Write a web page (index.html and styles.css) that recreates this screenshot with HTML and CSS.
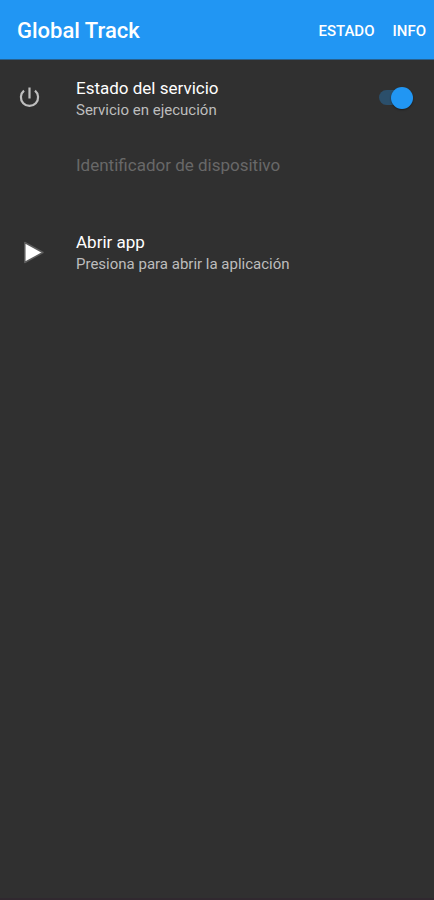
FILE: index.html
```html
<!DOCTYPE html>
<html lang="es">
<head>
<meta charset="utf-8">
<meta name="viewport" content="width=device-width, initial-scale=1">
<title>Global Track</title>
<link rel="stylesheet" href="styles.css">
</head>
<body>
<header class="app-bar">
  <h1 class="app-title">Global Track</h1>
  <nav class="actions">
    <a class="action" href="#estado">ESTADO</a>
    <a class="action" href="#info">INFO</a>
  </nav>
</header>
<main class="settings">
  <label class="row" for="service">
    <svg class="icon" viewBox="0 0 28 28" aria-hidden="true">
      <path d="M13.500 3.500v11M8 6.700a8.600 8.600 0 1 0 11 0" fill="none" stroke="#bebebe" stroke-width="2.200"/>
    </svg>
    <span class="text">
      <span class="name">Estado del servicio</span>
      <span class="summary">Servicio en ejecución</span>
    </span>
    <input class="switch" type="checkbox" role="switch" id="service" checked>
  </label>
  <div class="row disabled">
    <span class="icon"></span>
    <span class="text">
      <span class="name">Identificador de dispositivo</span>
      <span class="summary"></span>
    </span>
  </div>
  <button class="row" type="button">
    <svg class="icon" viewBox="0 0 28 28" aria-hidden="true">
      <path d="M8.800 4.500v20L27 14.500z" fill="#fff" stroke="#5c5c5c" stroke-width="1.500" stroke-linejoin="round"/>
    </svg>
    <span class="text">
      <span class="name">Abrir app</span>
      <span class="summary">Presiona para abrir la aplicación</span>
    </span>
  </button>
</main>
<footer class="system-edge"></footer>
</body>
</html>
```
FILE: styles.css
```css
* { box-sizing: border-box; }

body {
  margin: 0;
  min-height: 100vh;
  display: flex;
  flex-direction: column;
  background: #303030;
  color: #fff;
  font-family: Roboto, "Liberation Sans", sans-serif;
}

.app-bar {
  height: 60px;
  padding: 2px 8px 0 17px;
  display: flex;
  align-items: center;
  justify-content: space-between;
  background: #2196f3;
  border-bottom: 1px solid #27618f;
}

.app-title {
  margin: 0;
  font-size: 22px;
  font-weight: 500;
}

.actions { display: flex; gap: 18px; }

.action {
  color: inherit;
  font-size: 15px;
  font-weight: 500;
  text-decoration: none;
}

.settings { flex: 1; }

.row {
  width: 100%;
  height: 77px;
  padding: 0 21px 2px 16px;
  display: flex;
  align-items: center;
  border: 0;
  background: none;
  color: inherit;
  font: inherit;
  text-align: left;
}

.icon {
  width: 28px;
  height: 28px;
  margin-right: 32px;
  flex: none;
}

.text {
  flex: 1;
  padding-top: 2px;
  display: flex;
  flex-direction: column;
}

.name {
  font-size: 17px;
  line-height: 22px;
}

.summary {
  min-height: 22px;
  color: #bdbdbd;
  font-size: 15px;
  line-height: 22px;
}

.disabled .name { color: #686868; }

.switch {
  appearance: none;
  width: 34px;
  height: 22px;
  margin: 0;
  display: flex;
  align-items: center;
  position: relative;
}

.switch::before {
  content: "";
  width: 30px;
  height: 15px;
  border-radius: 8px;
  background: #444;
}

.switch::after {
  content: "";
  position: absolute;
  left: 0;
  width: 22px;
  height: 22px;
  border-radius: 50%;
  background: #bdbdbd;
  box-shadow: 0 1px 2px #0006;
}

.switch:checked::before { background: #2b4f6b; }

.switch:checked::after {
  left: auto;
  right: 0;
  background: #2196f3;
}

.system-edge {
  height: 2px;
  background: #30282f;
}
```
